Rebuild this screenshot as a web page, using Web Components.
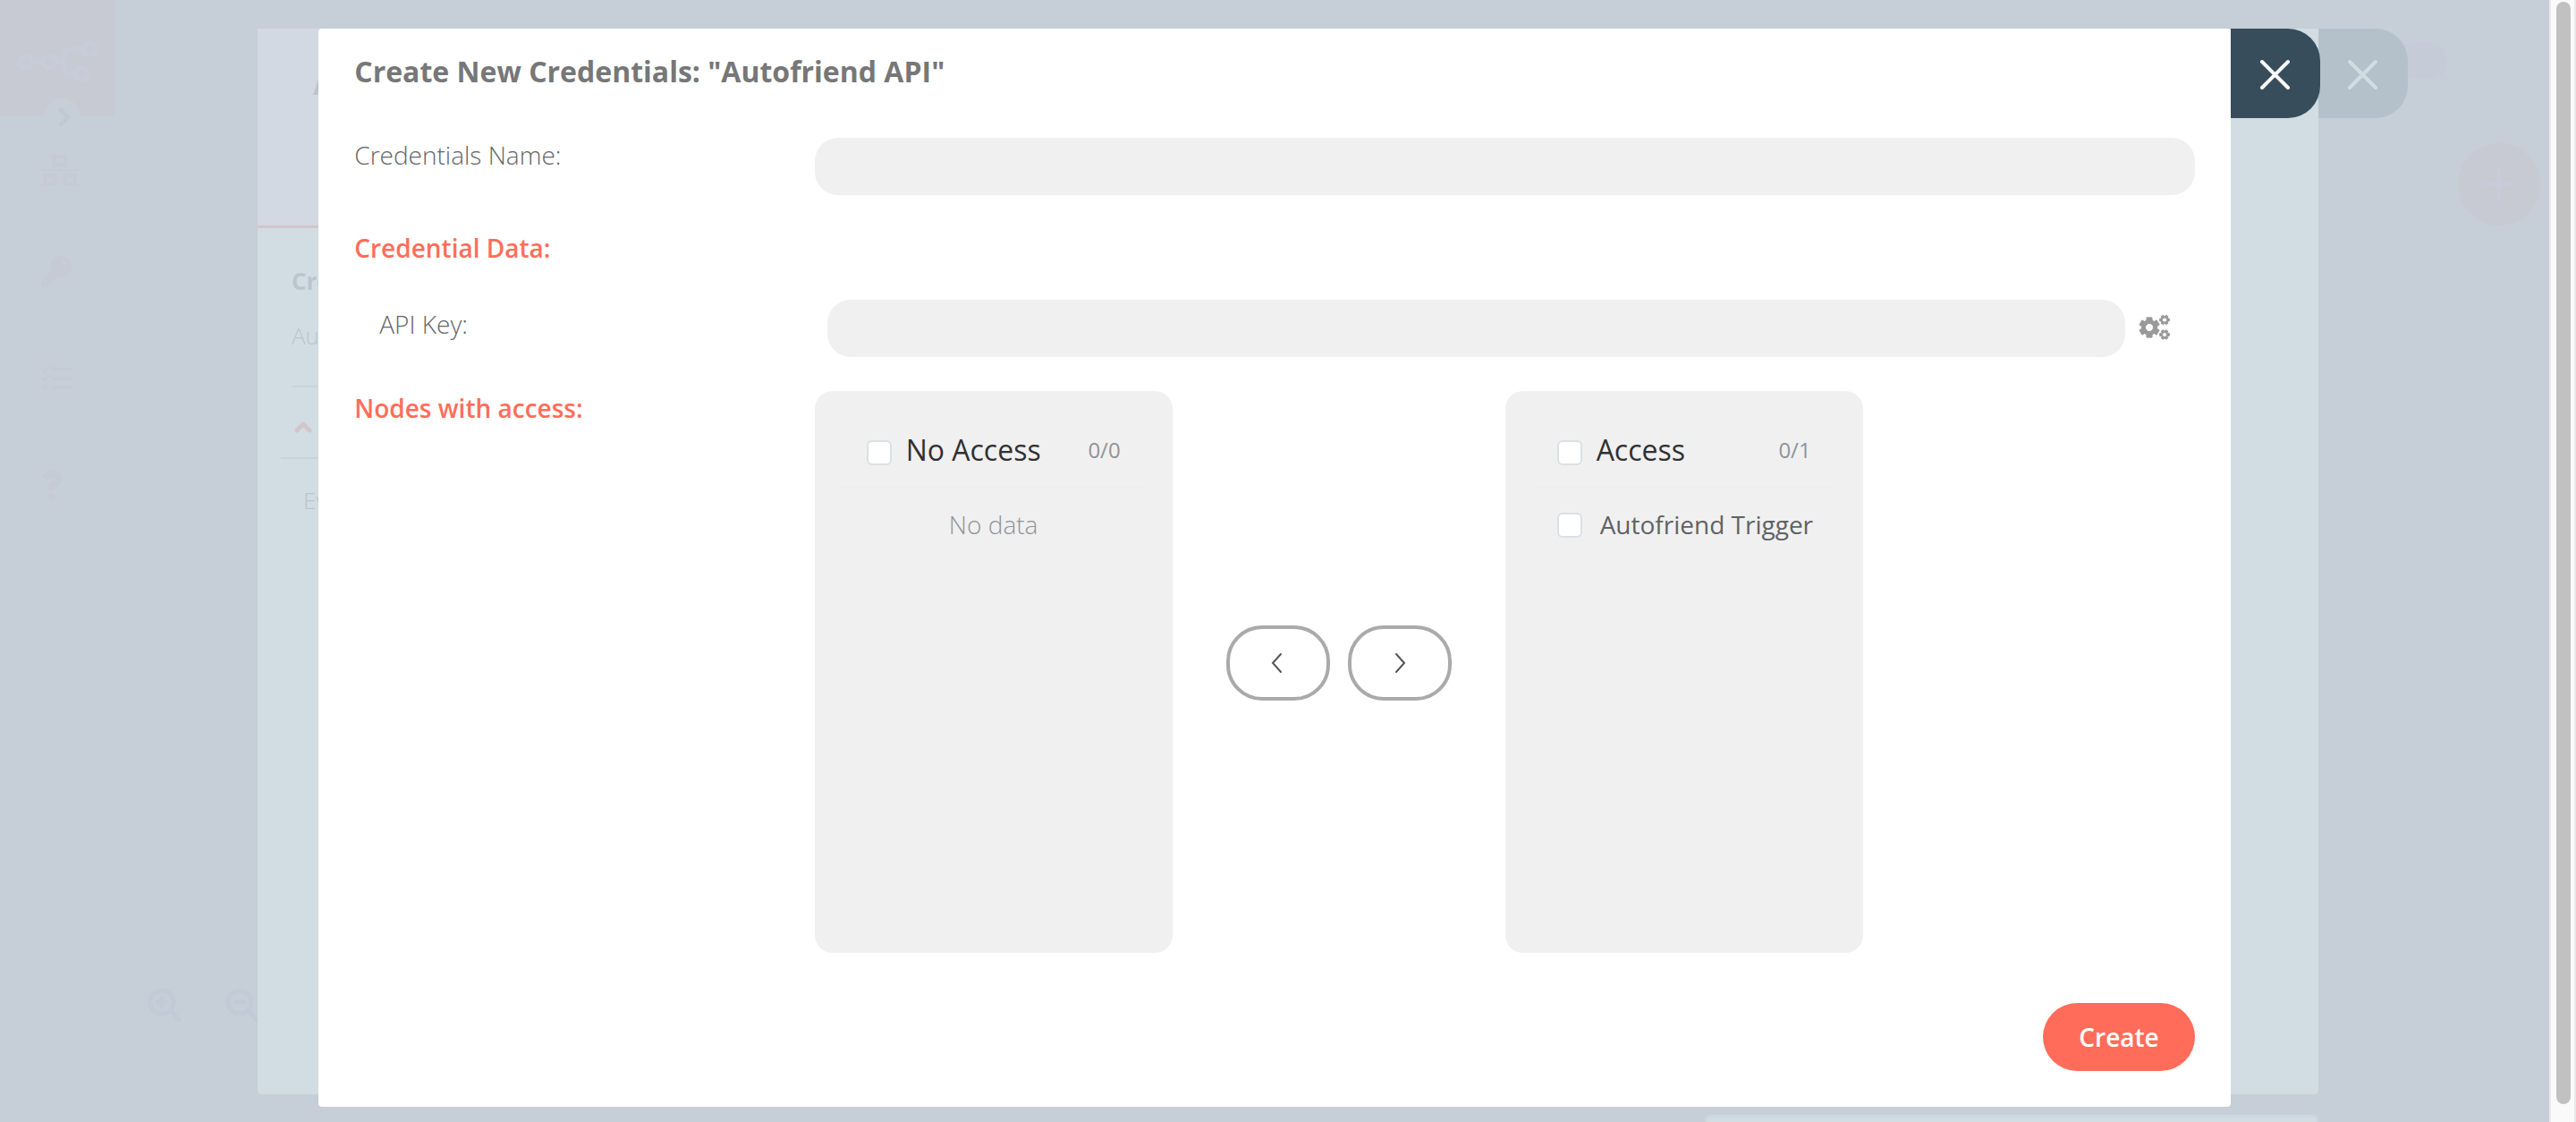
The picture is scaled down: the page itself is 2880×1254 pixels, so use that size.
<!DOCTYPE html>
<html lang="en">
<head>
<meta charset="utf-8">
<title>Credentials</title>
<style>
html, body { height: 100%; margin: 0; }
body { background: #c6ced8; font-family: "Open Sans", "Noto Sans", sans-serif; font-size: 28px; line-height: 38px; overflow: hidden; }
</style>
</head>
<body>
<app-shell>
  <app-sidebar></app-sidebar>
  <canvas-tools slot="canvas"></canvas-tools>
  <node-panel slot="overlay"></node-panel>
  <credentials-dialog slot="overlay" heading='Create New Credentials: "Autofriend API"'>
    <form-row label="Credentials Name:"></form-row>
    <section-title>Credential Data:</section-title>
    <form-row label="API Key:" inset></form-row>
    <node-access label="Nodes with access:">
      <transfer-panel slot="left" heading="No Access" count="0/0" empty="No data"></transfer-panel>
      <transfer-panel slot="right" heading="Access" count="0/1" item="Autofriend Trigger"></transfer-panel>
    </node-access>
  </credentials-dialog>
</app-shell>
<script>
const define = (name, render) => customElements.define(name, class extends HTMLElement {
  constructor() { super(); this.attachShadow({ mode: 'open' }); }
  connectedCallback() { this.shadowRoot.innerHTML = '<style>*{box-sizing:border-box}button,input{font:inherit;margin:0}svg{display:block}</style>' + render(this); }
});

/* Outline of a six-toothed cog with a round hole. */
const gear = (cx, cy, outer, inner, hole, turn) => {
  const points = [];
  for (let i = 0; i < 6; i++) {
    const a = turn + i * 60;
    for (const [d, r] of [[-21, inner], [-15, outer], [15, outer], [21, inner]]) {
      const t = (a + d) * Math.PI / 180;
      points.push((cx + r * Math.cos(t)).toFixed(2) + ' ' + (cy + r * Math.sin(t)).toFixed(2));
    }
  }
  return `M${points.join('L')}ZM${cx - hole} ${cy}a${hole} ${hole} 0 1 0 ${hole * 2} 0a${hole} ${hole} 0 1 0 ${-hole * 2} 0Z`;
};

define('app-shell', () => `
<style>
:host { display: flex; height: 100vh; }
main { flex: 1; position: relative; display: flex; overflow: hidden; }
.canvas { flex: 1; display: flex; }
.track { width: 30px; border: solid #e9e9ea; border-width: 0 2px; background: #fafafa; padding: 2px 4px 20px 6px; display: flex; }
.thumb { flex: 1; border-radius: 8px; background: #c1c1c1; }
</style>
<main><slot></slot><div class="canvas"><slot name="canvas"></slot></div><slot name="overlay"></slot></main>
<div class="track"><div class="thumb"></div></div>`);

define('app-sidebar', () => `
<style>
:host { display: block; width: 128px; color: #c6cad5; }
.logo { height: 130px; background: #c7cad3; padding-top: 44px; }
.logo svg { margin-left: 20px; }
.expand { margin: -20px 0 0 50px; width: 40px; height: 40px; border: 0; border-radius: 50%; padding: 0; background: #c6ced8; display: block; }
nav { padding: 22px 0 0 46px; display: flex; flex-direction: column; gap: 75px; }
nav a { display: block; height: 42px; color: inherit; }
</style>
<div class="logo"><svg width="92" height="50" viewBox="0 0 92 50" fill="none" stroke="#c6ccda" stroke-width="5">
<circle cx="9" cy="25" r="7"/><circle cx="35" cy="25" r="7"/><circle cx="81" cy="11" r="7"/><circle cx="71" cy="39" r="7"/>
<path d="M16 25h12M42 25h6q4 0 4-7 0-7 8-7h14M48 25q4 0 4 7 0 7 8 7h4"/></svg></div>
<button class="expand" aria-label="Expand"><svg width="40" height="40" viewBox="0 0 40 40" fill="none" stroke="#c0c9d3" stroke-width="5" stroke-linecap="round" stroke-linejoin="round"><path d="M18 13l8 8-8 8"/></svg></button>
<nav>
<a href="#workflows" aria-label="Workflows"><svg width="42" height="36" viewBox="0 0 42 36" fill="none" stroke="currentColor" stroke-width="4"><rect x="14" y="3" width="13" height="9"/><rect x="4" y="24" width="11" height="9"/><rect x="27" y="24" width="11" height="9"/><path stroke-width="2" d="M0 18h42M21 12v6M9 18v5M33 18v5"/></svg></a>
<a href="#credentials" aria-label="Credentials"><svg width="34" height="36" viewBox="0 3 34 36" overflow="visible"><path fill="currentColor" fill-rule="evenodd" d="M34 12a12 12 0 0 1-15 12l-3 3h-4v4H8v4H0v-7l11-11A12 12 0 1 1 34 12ZM28 8a3 3 0 1 0-6 0 3 3 0 0 0 6 0Z"/></svg></a>
<a href="#executions" aria-label="Executions"><svg width="34" height="36" viewBox="0 0 34 36" fill="none" stroke="currentColor" stroke-width="4"><path d="M12 7h22M12 17h22M12 27h22"/><path stroke-width="3" d="M1 6l3 3 5-6M1 16l3 3 5-6"/><circle cx="4" cy="27" r="1"/></svg></a>
<a href="#help" aria-label="Help"><svg width="26" height="38" viewBox="0 0 26 38" fill="none" stroke="currentColor" stroke-width="7"><path d="M4 12q3-5 9-5 7 0 7 5 0 3-4 5-5 2-5 8"/><circle cx="12" cy="33" r="4" fill="currentColor" stroke="none"/></svg></a>
</nav>`);

define('canvas-tools', () => `
<style>
:host { flex: 1; display: flex; justify-content: space-between; padding: 48px 10px 110px 37px; }
.zoom { align-self: flex-end; display: flex; gap: 48px; color: #c2cad5; }
.side { display: flex; flex-direction: column; align-items: flex-end; gap: 72px; }
.toggle { width: 60px; height: 40px; border-radius: 20px; background: #c6ccd7; margin-right: 104px; }
button { padding: 0; border: 0; background: none; color: inherit; }
.add { width: 92px; height: 92px; border-radius: 50%; background: #c7cad3; display: grid; place-items: center; }
</style>
<div class="zoom">
<button aria-label="Zoom in"><svg width="39" height="40" viewBox="0 0 39 40" fill="none" stroke="currentColor" stroke-width="5" stroke-linecap="round"><circle cx="16" cy="16" r="13"/><path d="M26 26l9 10M11 16h10M16 11v10"/></svg></button>
<button aria-label="Zoom out"><svg width="39" height="40" viewBox="0 0 39 40" fill="none" stroke="currentColor" stroke-width="5" stroke-linecap="round"><circle cx="16" cy="16" r="13"/><path d="M26 26l9 10M11 16h10"/></svg></button>
</div>
<div class="side"><div class="toggle"></div>
<button class="add" aria-label="Add node"><svg width="36" height="36" viewBox="0 0 36 36" stroke="#c6ccda" stroke-width="4"><path d="M0 18h36M18 0v36"/></svg></button></div>`);

define('close-button', () => `
<style>
:host { display: block; width: 100px; height: 100px; }
button { width: 100%; height: 100%; border: 0; padding: 0; border-radius: 0 36px 36px 0; background: var(--tab, #384d5b); color: var(--cross, #fff); }
</style>
<button aria-label="Close"><svg width="100" height="100" viewBox="0 0 100 100" stroke="currentColor" stroke-width="4" stroke-linecap="round"><path d="M35 37l29 29M64 37l-29 29"/></svg></button>`);

define('node-panel', () => `
<style>
:host { position: absolute; top: 32px; left: 288px; right: 258px; bottom: 0; display: flex; flex-direction: column; color: #bbc5cd; font-size: 26px; --tab: #b4c1ca; --cross: #d1dde3; }
.window { flex: 1; border-radius: 0 0 4px 4px; background: #d1dde3; }
.settings { width: 40%; }
header { height: 223px; padding: 45px 0 0 62px; background: #d2d9e2; border-bottom: 3px solid #d3c5cc; font-size: 30px; line-height: 36px; font-weight: 700; }
.body { padding: 41px 0 0 38px; }
h2, p { margin: 0; font-size: 26px; line-height: 36px; }
h2 { font-weight: 700; }
p { margin-top: 25px; font-weight: 300; }
.rule { border-top: 2px solid #c9d3db; margin-top: 38px; }
.rule.wide { margin: 27px 0 0 -12px; }
.fold { margin: 37px 0 0 3px; }
.event { margin: 28px 0 0 13px; }
close-button { position: absolute; top: 0; left: 100%; }
footer { height: 8px; margin: 23px 0 0 auto; width: 686px; border: solid #ccd7df; border-width: 3px 3px 0; border-radius: 6px 6px 0 0; background: #d1dde3; }
</style>
<div class="window"><div class="settings"><header>A</header>
<div class="body"><h2>Cre</h2><p>Au</p><div class="rule"></div>
<svg class="fold" width="21" height="14" viewBox="0 0 21 14" fill="none" stroke="#d3c5cc" stroke-width="5" stroke-linecap="round" stroke-linejoin="round"><path d="M3 11l7-7 7 7"/></svg>
<div class="rule wide"></div><p class="event">Ev</p></div></div></div>
<footer></footer><close-button></close-button>`);

define('credentials-dialog', host => `
<style>
:host { position: absolute; top: 32px; left: 0; right: 0; margin: 0 auto; width: 75%; }
section { background: #fff; border-radius: 4px; padding: 26px 40px 40px; }
h1 { margin: 0 0 52px; font-size: 32px; line-height: 44px; font-weight: 700; color: #777; }
close-button { position: absolute; top: 0; left: 100%; }
.actions { display: flex; justify-content: flex-end; margin-top: 56px; }
.actions button { height: 76px; padding: 0 40px; border: 0; border-radius: 38px; background: #ff6d5a; color: #fff; font-weight: 600; }
</style>
<section role="dialog" aria-labelledby="title"><h1 id="title">${host.getAttribute('heading')}</h1>
<slot></slot>
<div class="actions"><button>Create</button></div></section>
<close-button></close-button>`);

define('section-title', () => `
<style>:host { display: block; padding: 40px 0 39px; color: #ff6d5a; font-weight: 600; }</style><slot></slot>`);

define('form-row', host => `
<style>
:host { display: grid; grid-template-columns: 25% 1fr auto; color: #666; font-weight: 300; }
:host([inset]) { padding: 0 28px; }
:host([inset]) label { padding-top: 8px; }
input { width: 100%; height: 64px; border: 0; border-radius: 26px; background: #f0f0f0; padding: 0 28px; outline: 0; }
button { align-self: center; margin-left: 14px; padding: 0; border: 0; background: none; color: #999; }
</style>
<label for="field">${host.getAttribute('label')}</label><input id="field" type="text">
${host.hasAttribute('inset') ? `<button aria-label="Parameter options"><svg width="36" height="30" viewBox="0 0 36 30" fill="currentColor" fill-rule="evenodd" stroke="currentColor" stroke-linejoin="round"><path d="${gear(13, 14, 11.5, 8.5, 4.5, 30)}"/><path d="${gear(30, 5.5, 5.5, 4, 2.5, 0)}"/><path d="${gear(30, 22, 5.5, 4, 2.5, 0)}"/></svg></button>` : ''}`);

define('node-access', host => `
<style>
:host { display: grid; grid-template-columns: 25% 1fr; margin-top: 38px; color: #ff6d5a; font-weight: 600; }
.transfer { display: flex; align-items: center; }
.moves { display: flex; gap: 20px; padding: 0 60px 20px; }
button { width: 116px; height: 84px; padding: 0; border: 4px solid #aaa; border-radius: 40px; background: #fff; display: grid; place-items: center; }
</style>
<div>${host.getAttribute('label')}</div>
<div class="transfer"><slot name="left"></slot>
<div class="moves">
<button aria-label="Move left"><svg width="28" height="28" viewBox="0 0 28 28" fill="none" stroke="#555" stroke-width="2" stroke-linecap="round"><path d="M17 4L8 14l9 10"/></svg></button>
<button aria-label="Move right"><svg width="28" height="28" viewBox="0 0 28 28" fill="none" stroke="#555" stroke-width="2" stroke-linecap="round"><path d="M10 4l9 10-9 10"/></svg></button>
</div><slot name="right"></slot></div>`);

define('transfer-panel', host => {
  const item = host.getAttribute('item');
  return `
<style>
:host { display: block; width: 400px; height: 628px; padding-top: 44px; box-sizing: border-box; border-radius: 20px; background: #f0f0f0; color: #606266; font-weight: 400; }
header { display: flex; height: 65px; margin: 0 28px; padding: 0 30px; border-bottom: 2px solid #ebeef5; line-height: 44px; }
header label { flex: 1; padding-left: 16px; font-size: 32px; color: #303133; }
header span { font-size: 24px; color: #909399; }
input { appearance: none; flex: none; width: 28px; height: 28px; border: 2px solid #dcdfe6; border-radius: 6px; background: #fff; }
header input { margin-top: 11px; }
.item { display: flex; padding: 21px 0 0 58px; }
.item input { margin-top: 6px; }
.item label { padding-left: 20px; white-space: nowrap; }
p { margin: 0; padding-top: 21px; text-align: center; font-weight: 300; color: #909399; }
</style>
<header><input type="checkbox" id="all"><label for="all">${host.getAttribute('heading')}</label><span>${host.getAttribute('count')}</span></header>
${item ? `<div class="item"><input type="checkbox" id="item"><label for="item">${item}</label></div>` : `<p>${host.getAttribute('empty')}</p>`}`;
});
</script>
</body>
</html>
